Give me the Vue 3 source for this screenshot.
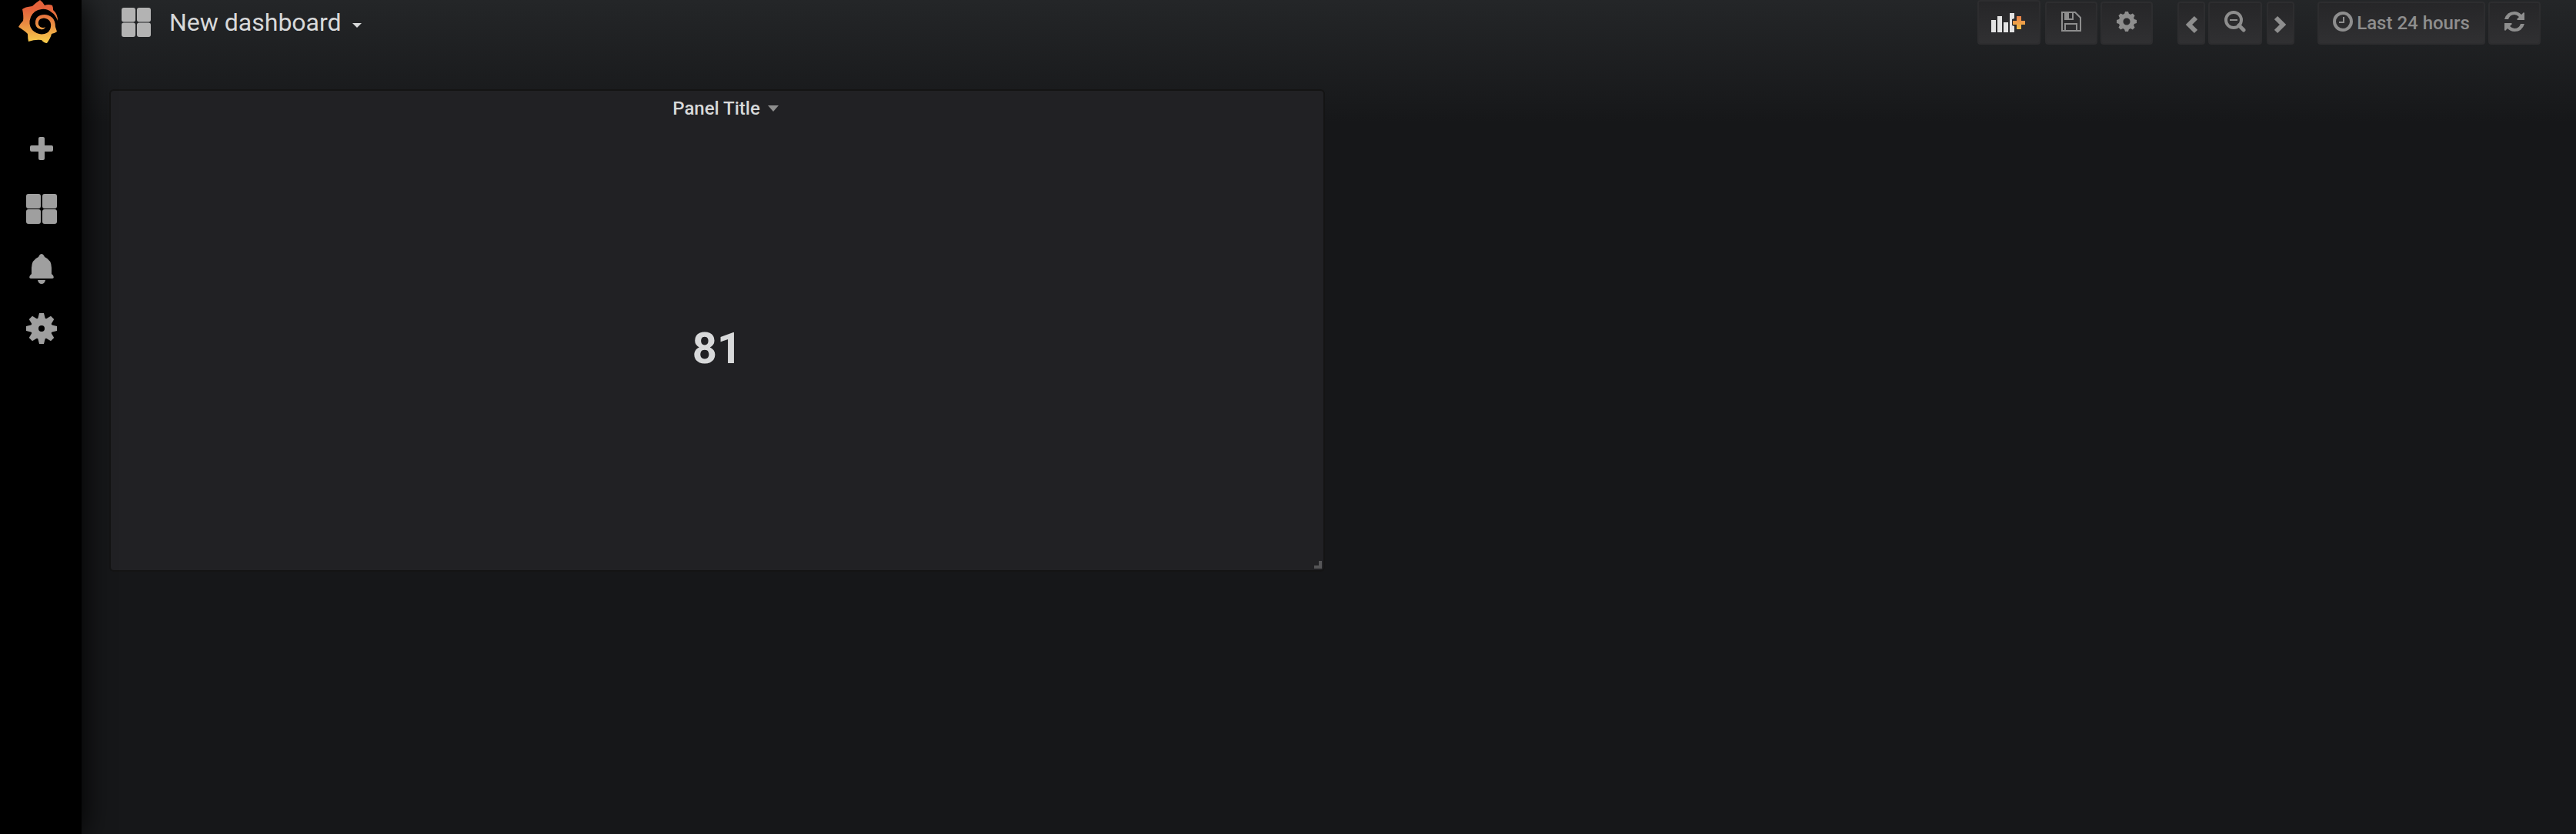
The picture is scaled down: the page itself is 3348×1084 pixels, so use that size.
<script setup>
const menu = ['Create', 'Dashboards', 'Alerting', 'Configuration']
const tiles = [[0, 0], [21, 0], [0, 20], [21, 20]]
const teeth = [0, 45, 90, 135, 180, 225, 270, 315]
</script>

<template>
  <div class="app">
    <nav class="side" aria-label="Main">
      <a class="logo" href="#" aria-label="Home">
        <svg width="52" height="56" viewBox="0 0 52 56">
          <defs>
            <linearGradient id="flame" x1="0" y1="0" x2="0" y2="1">
              <stop offset="0.2" stop-color="#e5623b" />
              <stop offset="0.55" stop-color="#e98b42" />
              <stop offset="1" stop-color="#f9cf4b" />
            </linearGradient>
          </defs>
          <path
            fill="url(#flame)"
            d="M28 0 Q31 2 34 7 Q39 5 44 7 Q45 9 45 13 Q51 18 51 27 Q48 19 43 16 Q37 11 30 12 Q20 13 16 22 Q12 32 18 39 Q25 46 34 44 Q41 42 42 35 Q43 28 38 25 Q33 22 28 25 Q25 28 26 32 Q28 36 32 36 Q34 36 35 35 Q33 39 29 38 Q23 37 22 31 Q21 23 28 20 Q37 17 44 23 Q48 27 48 35 L50 41 Q48 43 43 44 Q42 49 37 56 Q33 56 30 52 Q22 51 13 54 Q12 50 12 44 Q8 40 0 35 Q2 31 6 27 Q7 21 5 12 Q8 9 18 8 Q22 4 28 0Z"
          />
        </svg>
      </a>
      <ul class="menu">
        <li v-for="(name, i) in menu" :key="name">
          <a href="#" :aria-label="name">
            <svg v-if="i === 0" width="30" height="30" viewBox="0 0 30 30">
              <path d="M11 2q0-2 2-2h4q2 0 2 2v9h9q2 0 2 2v4q0 2-2 2h-9v9q0 2-2 2h-4q-2 0-2-2v-9H2q-2 0-2-2v-4q0-2 2-2h9z" />
            </svg>
            <svg v-else-if="i === 1" width="40" height="39" viewBox="0 0 40 39">
              <rect v-for="t in tiles" :key="t.join()" :x="t[0]" :y="t[1]" width="19" height="19" rx="3" />
            </svg>
            <svg v-else-if="i === 2" width="32" height="39" viewBox="0 0 32 39">
              <path d="M13 2q3-4 6 0l1 2q9 4 9 14v8l2 2q2 4-1 4H2q-3 0-1-4l2-2v-8Q3 8 12 4zM11 34h10q-1 5-5 5t-5-5z" />
            </svg>
            <svg v-else width="40" height="40" viewBox="0 0 40 40">
              <path v-for="a in teeth" :key="a" d="M17 0h6l2 8H15z" :transform="`rotate(${a} 20 20)`" />
              <path fill-rule="evenodd" d="M20 6a14 14 0 1 0 0 28a14 14 0 1 0 0-28zm0 10a4 4 0 1 1 0 8a4 4 0 1 1 0-8z" />
            </svg>
          </a>
        </li>
      </ul>
    </nav>

    <main class="page">
      <header class="bar">
        <button class="title" type="button">
          <svg class="tiles" width="38" height="38" viewBox="0 0 40 39" preserveAspectRatio="none">
            <rect v-for="t in tiles" :key="t.join()" :x="t[0]" :y="t[1]" width="19" height="19" rx="3" />
          </svg>
          <span>New dashboard</span>
          <svg class="caret" width="12" height="6" viewBox="0 0 12 6"><path d="M0 0h12L6 6z" /></svg>
        </button>

        <div class="tools">
          <div class="group panel-tools">
            <button class="btn add" type="button" aria-label="Add panel">
              <svg width="44" height="26" viewBox="0 0 44 26">
                <defs>
                  <linearGradient id="plus" x1="0" y1="0" x2="0" y2="1">
                    <stop offset="0" stop-color="#e8804b" />
                    <stop offset="1" stop-color="#f2bd45" />
                  </linearGradient>
                </defs>
                <path fill="#e3e3e3" d="M0 9h6v16H0zM8 4h6v21H8zM16 12h6v13h-6zM24 0h6v7l-3 1v8l3 1v8h-6z" />
                <path fill="url(#plus)" d="M33 4h6v6h5v5h-5v6h-6v-6h-5v-5h5z" />
              </svg>
            </button>
            <button class="btn" type="button" aria-label="Save dashboard">
              <svg width="26" height="26" viewBox="0 0 26 26">
                <path fill="none" stroke="#8e8e8e" stroke-width="2" d="M1 1h17l7 7v17H1zM5 25v-9h15v9M15 2v8H5V2" />
                <path d="M5 1h5v9H5zM14 2h2v8h-2z" />
              </svg>
            </button>
            <button class="btn" type="button" aria-label="Dashboard settings">
              <svg width="26" height="26" viewBox="0 0 40 40">
                <path v-for="a in teeth" :key="a" d="M17 0h6l3 9H14z" :transform="`rotate(${a} 20 20)`" />
                <path fill-rule="evenodd" d="M20 4a16 16 0 1 0 0 32a16 16 0 1 0 0-32zm0 9a7 7 0 1 1 0 14a7 7 0 1 1 0-14z" />
              </svg>
            </button>
          </div>
          <div class="group">
            <button class="btn narrow" type="button" aria-label="Shift time back">
              <svg width="16" height="24" viewBox="0 0 16 24">
                <path fill="none" stroke="#8e8e8e" stroke-width="6" d="M14 3l-9 9 9 9" />
              </svg>
            </button>
            <button class="btn zoom" type="button" aria-label="Zoom out">
              <svg width="28" height="28" viewBox="0 0 28 28">
                <path fill="none" stroke="#8e8e8e" stroke-width="4" d="M12 2a10 10 0 1 0 0 20a10 10 0 1 0 0-20z" />
                <path fill="none" stroke="#8e8e8e" stroke-width="5" stroke-linecap="round" d="M19 19l6 6" />
                <path d="M7 11h10v2H7z" />
              </svg>
            </button>
            <button class="btn narrow" type="button" aria-label="Shift time forward">
              <svg width="16" height="24" viewBox="0 0 16 24">
                <path fill="none" stroke="#8e8e8e" stroke-width="6" d="M2 3l9 9-9 9" />
              </svg>
            </button>
          </div>
          <div class="group">
            <button class="btn time" type="button">
              <svg width="26" height="26" viewBox="0 0 26 26">
                <circle cx="13" cy="13" r="11" fill="none" stroke="#8e8e8e" stroke-width="4" />
                <path d="M13 7h2v8H8v-2h5z" />
              </svg>
              <span>Last 24 hours</span>
            </button>
            <button class="btn" type="button" aria-label="Refresh">
              <svg width="26" height="26" viewBox="0 0 26 26">
                <path d="M0 10Q3 0 13 0q5 0 9 4l3-3 1 1v9h-9l-1-1 3-3q-3-3-6-3-6 0-8 6zM26 16q-3 10-13 10-5 0-9-4l-3 3-1-1v-9h9l1 1-3 3q3 3 6 3 6 0 8-6z" />
              </svg>
            </button>
          </div>
        </div>
      </header>

      <section class="panel">
        <button class="panel-title" type="button">
          <span>Panel Title</span>
          <svg width="14" height="8" viewBox="0 0 14 8"><path d="M0 0h14L7 8z" /></svg>
        </button>
        <div class="value">81</div>
        <span class="grip"></span>
      </section>
    </main>
  </div>
</template>

<style>
body {
  margin: 0;
  background: #161719;
}
</style>

<style scoped>
.app {
  display: flex;
  min-height: 100vh;
  font-family: Roboto, sans-serif;
  color: #d8d9da;
}
.side {
  flex: none;
  width: 106px;
  background: #000;
  box-shadow: 0 0 40px #000;
  z-index: 1;
}
.logo {
  display: block;
  height: 56px;
  padding-left: 24px;
}
.menu {
  list-style: none;
  margin: 98px 0 0;
  padding: 0 0 0 2px;
}
.menu a {
  display: flex;
  align-items: center;
  justify-content: center;
  height: 78px;
}
svg {
  display: block;
  flex: none;
}
.menu svg {
  fill: #9f9f9f;
}
.page {
  flex: 1;
  min-width: 0;
  box-sizing: border-box;
  padding: 0 46px 0 36px;
  background: linear-gradient(#242628, #161719 160px);
}
.bar {
  display: flex;
  justify-content: space-between;
  height: 116px;
}
button {
  margin: 0;
  padding: 0;
  border: 0;
  background: none;
  font: inherit;
  color: inherit;
}
.title {
  display: flex;
  align-items: center;
  height: 58px;
  padding-left: 16px;
  font-size: 32px;
}
.tiles {
  margin-right: 24px;
  fill: #b3b3b3;
}
.caret {
  margin: 8px 0 0 14px;
  fill: #d8d9da;
}
.tools {
  display: flex;
  align-items: flex-start;
  gap: 30px;
}
.group {
  display: flex;
  align-items: flex-end;
  gap: 4px;
  height: 58px;
}
.panel-tools {
  margin-right: 2px;
}
.btn {
  display: flex;
  align-items: center;
  justify-content: center;
  box-sizing: border-box;
  width: 68px;
  height: 56px;
  padding-bottom: 4px;
  border: 2px solid #2d2d2f;
  border-radius: 4px;
  background: linear-gradient(#262628, #303032);
  color: #8e8e8e;
  fill: #8e8e8e;
}
.add {
  width: 82px;
  height: 58px;
  padding: 2px 2px 0 0;
  margin-right: 2px;
}
.narrow {
  width: 36px;
  padding: 4px 0 0;
}
.zoom {
  width: 70px;
}
.zoom + .narrow {
  margin-left: 2px;
}
.time {
  width: 218px;
  gap: 5px;
  font-size: 24px;
  font-weight: 500;
}
.time span {
  padding-top: 4px;
}
.panel {
  position: relative;
  display: flex;
  flex-direction: column;
  box-sizing: border-box;
  width: 50%;
  height: 627px;
  border: 2px solid #141414;
  border-radius: 6px;
  background: #212124;
}
.panel-title {
  display: flex;
  align-items: center;
  justify-content: center;
  height: 46px;
  gap: 10px;
  padding-left: 22px;
  font-size: 24px;
  font-weight: 500;
}
.panel-title svg {
  fill: #8e8e8e;
}
.value {
  flex: 1;
  display: flex;
  align-items: center;
  justify-content: center;
  font-size: 56px;
  font-weight: 700;
}
.grip {
  position: absolute;
  right: 2px;
  bottom: 2px;
  width: 6px;
  height: 6px;
  border: solid #555557;
  border-width: 0 4px 4px 0;
}
</style>
